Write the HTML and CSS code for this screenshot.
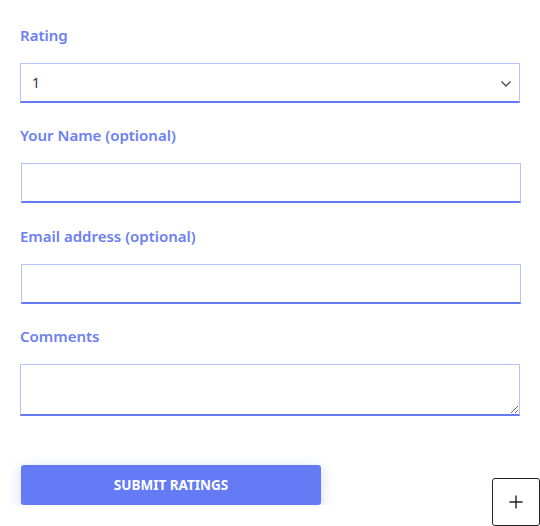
FILE: index.html
```html
<!DOCTYPE html>
<html>
<head>
<meta charset="utf-8">
<link rel="stylesheet" href="styles.css">
</head>
<body>
<form class="rating-form">
  <div class="field">
    <label class="field-label" for="rating">Rating</label>
    <div class="select-wrap">
      <select id="rating" class="control select">
        <option>1</option>
        <option>2</option>
        <option>3</option>
        <option>4</option>
        <option>5</option>
      </select>
      <svg class="chevron" width="12" height="8" viewBox="0 0 12 8"><path d="M1.5 1.5 L6 6 L10.5 1.5" fill="none" stroke="#555" stroke-width="1.5"/></svg>
    </div>
  </div>
  <div class="field">
    <label class="field-label" for="name">Your Name (optional)</label>
    <input id="name" class="control input" type="text">
  </div>
  <div class="field">
    <label class="field-label" for="email">Email address (optional)</label>
    <input id="email" class="control input" type="email">
  </div>
  <div class="field">
    <label class="field-label" for="comments">Comments</label>
    <textarea id="comments" class="control textarea"></textarea>
  </div>
  <div class="actions">
    <button type="button" class="submit">SUBMIT RATINGS</button>
  </div>
</form>
<button type="button" class="fab" aria-label="Add">
  <svg width="14" height="14" viewBox="0 0 14 14"><path d="M7 0.5 V13.5 M0.5 7 H13.5" stroke="#222" stroke-width="1.4" fill="none"/></svg>
</button>
</body>
</html>
```
FILE: styles.css
```css
html, body {
  margin: 0;
  padding: 0;
  background: #ffffff;
}
body {
  font-family: "Noto Sans", "Open Sans", sans-serif;
}
.rating-form {
  padding: 25px 20px 0 20px;
  width: 500px;
}
.field {
  display: flex;
  flex-direction: column;
  margin-bottom: 22.33px;
}
.field-label {
  display: block;
  font-size: 15px;
  font-weight: 600;
  line-height: 21px;
  color: #6b80f3;
  margin-bottom: 17px;
}
.control {
  box-sizing: border-box;
  width: 500px;
  border: 1px solid #b6c2fb;
  border-bottom: 2px solid #6479f2;
  border-radius: 0;
  background: #fff;
  outline: none;
  margin: 0;
  font-family: "Noto Sans", "Open Sans", sans-serif;
}
.select-wrap {
  position: relative;
  width: 500px;
}
.select {
  -webkit-appearance: none;
  appearance: none;
  height: 40px;
  padding: 0 11px;
  font-size: 14px;
  color: #333;
}
.chevron {
  position: absolute;
  right: 8px;
  top: 17px;
  pointer-events: none;
}
.input {
  height: 40px;
  margin-left: 1px;
  padding: 0 10px;
  font-size: 14px;
}
.textarea {
  height: 52px;
  padding: 8px 10px;
  font-size: 14px;
  resize: both;
  display: block;
}
.actions {
  padding-top: 26.67px;
}
.submit {
  width: 300px;
  height: 40px;
  margin-left: 1px;
  border: none;
  border-radius: 3px;
  background: #647bf5;
  color: #fff;
  font-family: "Noto Sans", "Open Sans", sans-serif;
  font-weight: 700;
  font-size: 13.5px;
  letter-spacing: 0;
  box-shadow: 0 4px 14px rgba(100, 121, 242, 0.3);
  cursor: pointer;
}
.fab {
  position: fixed;
  right: 0;
  bottom: 0;
  width: 48px;
  height: 48px;
  box-sizing: border-box;
  border: 1px solid #222;
  border-radius: 3px;
  background: #fff;
  display: flex;
  align-items: center;
  justify-content: center;
  padding: 0;
}
```
